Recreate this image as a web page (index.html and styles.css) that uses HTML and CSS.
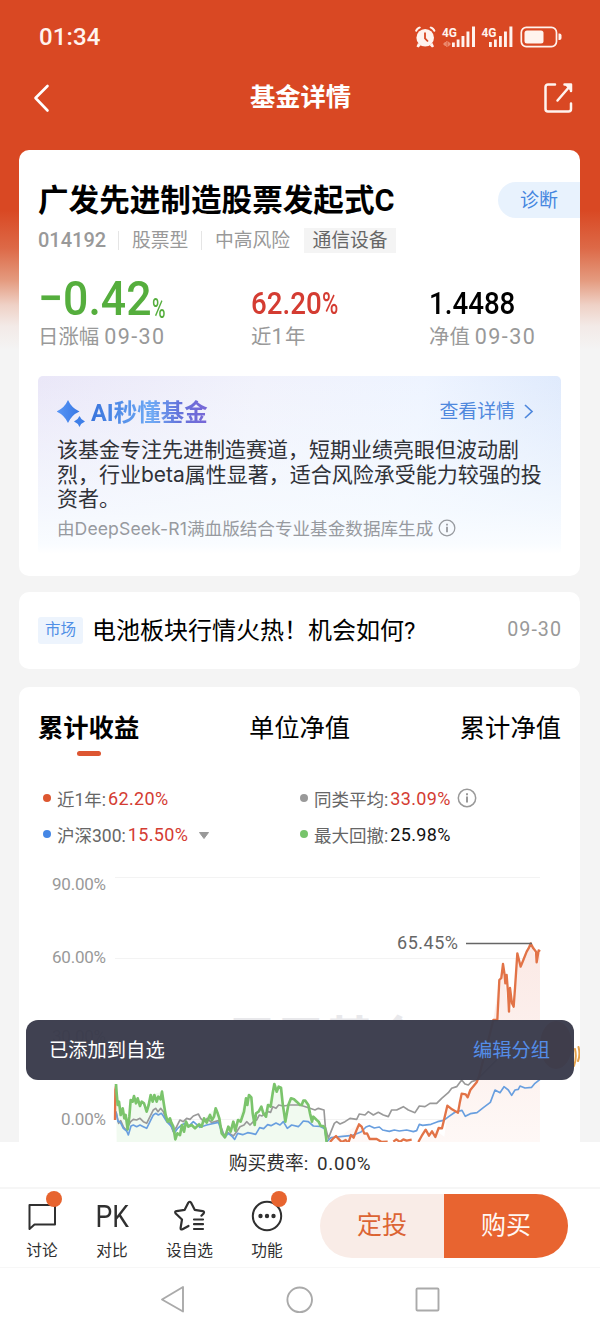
FILE: index.html
```html
<!DOCTYPE html>
<html lang="zh-CN">
<head>
<meta charset="utf-8">
<title>基金详情</title>
<link rel="stylesheet" href="styles.css">
</head>
<body>
<div class="phone">
  <main class="content">
    <div class="status">
      <span class="clock">01:34</span>
      <svg class="status-icons" width="150" height="28" viewBox="414 23 150 28">
        <g fill="#fff3ee" stroke="none">
          <circle cx="425.200" cy="37.800" r="8.800"/>
          <path d="M415 31a7 7 0 0 1 5-4.500l1 1.300a9 9 0 0 0-4.600 4.200zM435.500 31a7 7 0 0 0-5-4.500l-1 1.300a9 9 0 0 1 4.600 4.200z"/>
          <path d="M418 43l3 2-2.500 2.500-2-1zM432.500 43l-3 2 2.500 2.500 2-1z"/>
          <path d="M452 42.500h2.800v4.500H452zM456.700 39.500h2.800V47h-2.800zM461.500 36h2.900v11h-2.900zM466.500 31.500h2.900V47h-2.900zM472 26.500h3V47h-3zM489 42h2.800v5H489zM494 39.500h2.800V47H494zM499 36h2.800v11H499zM504 31.500h2.900V47H504zM509.400 26.500h3V47h-3z"/>
          <rect x="524.500" y="30.500" width="19" height="13" rx="2.500"/>
          <path d="M558.500 33.500h1a2 2 0 0 1 2 2v2.500a2 2 0 0 1-2 2h-1z"/>
        </g>
        <path d="M425 32.500v5.800l3 3.200" fill="none" stroke="#d94924" stroke-width="1.800"/>
        <path d="M443.500 44l2-2v4zM450.500 44l-2-2v4zM446.500 41v6M447.800 41v6" fill="#ee9479" stroke="#ee9479" stroke-width=".7"/>
        <rect x="521.300" y="27.400" width="35.200" height="19.200" rx="5" fill="none" stroke="#fff3ee" stroke-width="1.700"/>
        <text x="442" y="37" class="net" textLength="15" lengthAdjust="spacingAndGlyphs">4G</text>
        <text x="481.500" y="37" class="net" textLength="15" lengthAdjust="spacingAndGlyphs">4G</text>
      </svg>
    </div>
    <header class="navbar">
      <svg width="20" height="32" viewBox="0 0 20 32"><path d="M15.500 4L3.500 16l12 12.500" fill="none" stroke="#fff" stroke-width="2.600" stroke-linecap="round" stroke-linejoin="round"/></svg>
      <h1>基金详情</h1>
      <svg width="32" height="32" viewBox="0 0 32 32"><g fill="none" stroke="#fff4ef" stroke-width="2.500" stroke-linecap="round" stroke-linejoin="round"><path d="M12 2.500H5A2.500 2.500 0 0 0 2.500 5v22A2.500 2.500 0 0 0 5 29.500h20.500A2.500 2.500 0 0 0 28 27v-5.500M14.500 18.500L27 4"/><path d="M21.500 2.500H28V9"/></g><path d="M21 2h7.500v8z" fill="#fff4ef"/></svg>
    </header>

    <section class="card fund">
      <div class="fund-head"><h2>广发先进制造股票发起式C</h2><span class="diagnose">诊断</span></div>
      <div class="meta"><b>014192</b><i></i><span class="kind">股票型</span><i></i><span class="risk">中高风险</span><em>通信设备</em></div>
      <div class="stats">
        <div class="stat"><div class="value down"><span class="big">−0.42</span><span class="unit">%</span></div><p>日涨幅 <span class="date">09-30</span></p></div>
        <div class="stat"><div class="value up"><span class="year">62.20<small>%</small></span></div><p>近<span class="date">1</span>年</p></div>
        <div class="stat"><div class="value"><span class="nav">1.4488</span></div><p>净值 <span class="date">09-30</span></p></div>
      </div>
      <div class="ai">
        <div class="ai-head">
          <svg width="30" height="30" viewBox="0 0 30 30"><defs><linearGradient id="spark" x1="0" x2="1"><stop stop-color="#5a97f6"/><stop offset="1" stop-color="#3777e4"/></linearGradient></defs><path d="M11 1Q14.500 9 22.500 12.500 14.500 16 11 24 7.500 16-.5 12.500 7.500 9 11 1z" fill="url(#spark)"/><path d="M22.500 17q1.600 4 5.500 5.500-3.900 1.500-5.500 5.500-1.600-4-5.500-5.500 3.900-1.500 5.500-5.500z" fill="#3f7fe8"/></svg>
          <strong>AI秒懂基金</strong>
          <a>查看详情</a>
          <svg class="chev" width="12" height="18" viewBox="0 0 12 18"><path d="M2 2l7 6.500L2 15" fill="none" stroke="#4f88dd" stroke-width="1.700"/></svg>
        </div>
        <p class="summary">该基金专注先进制造赛道，短期业绩亮眼但波动剧<br>烈，行业beta属性显著，适合风险承受能力较强的投<br>资者。</p>
        <div class="source"><span>由<span class="lat">DeepSeek-R1</span>满血版结合专业基金数据库生成</span><svg width="18" height="18" viewBox="0 0 20 20"><circle cx="10" cy="10" r="8.700" fill="none" stroke="#979a9f" stroke-width="1.400"/><path d="M10 8.600v6M10 5.300v1.900" stroke="#979a9f" stroke-width="2"/></svg></div>
      </div>
    </section>

    <section class="card news"><span class="tag">市场</span><span class="headline">电池板块行情火热！机会如何?</span><time>09-30</time></section>

    <section class="card perf">
      <div class="tabs"><span class="on">累计收益</span><span>单位净值</span><span>累计净值</span></div>
      <div class="legend">
        <div><i class="dot orange"></i><span>近1年:</span><b class="red">62.20%</b></div>
        <div><i class="dot gray"></i><span>同类平均:</span><b class="red">33.09%</b><svg class="info" width="20" height="20" viewBox="0 0 20 20"><circle cx="10" cy="10" r="8.700" fill="none" stroke="#999" stroke-width="1.500"/><path d="M10 8.600v6M10 5.300v1.900" stroke="#999" stroke-width="2"/></svg></div>
        <div><i class="dot blue"></i><span>沪深300:</span><b class="red">15.50%</b><svg class="caret" width="10" height="7" viewBox="0 0 10 7"><path d="M.5.500h9L5 6.500z" fill="#999" stroke="#999" stroke-linejoin="round"/></svg></div>
        <div><i class="dot green"></i><span>最大回撤:</span><b>25.98%</b></div>
      </div>
      <svg class="chart" width="561" height="282" viewBox="19 860 561 282">
        <defs><linearGradient id="gain" x1="0" y1="0" x2="0" y2="1"><stop stop-color="#fbe9e5"/><stop offset="1" stop-color="#fef8f6"/></linearGradient></defs>
        <path d="M115 877.500h425M115 958.500h425M115 1038.500h425M115 1119.500h425" stroke="#f3f3f3" fill="none"/>
        <text class="mark" x="229" y="1054" textLength="192">天天基金</text>
        <g class="axis"><text x="52" y="889.500" textLength="54">90.00%</text><text x="52" y="963" textLength="54">60.00%</text><text x="52" y="1042" textLength="54">30.00%</text><text x="61" y="1125" textLength="45">0.00%</text></g>
        <g transform="translate(0 860) scale(.33333)" fill="none" stroke-linejoin="round">
          <path fill="#f1faf0" d="M348 672 357 725 383 808 392 720 402 708 440 755 452 705 486 695 497 765 514 788 526 838 546 800 585 795 612 775 647 745 675 832 714 780 742 705 764 795 804 735 823 672 843 683 856 785 873 715 900 735 916 722 936 785 956 785 975 805 980 846H350z"/>
          <path fill="url(#gain)" d="M990 846 1078 792 1110 846H1255L1305 810 1333 830 1345 735 1374 757 1385 704 1405 700 1430 660 1480 480 1498 360 1509 312 1525 458 1541 440 1552 280 1562 320 1592 250 1610 300 1620 275V846z"/>
          <path class="line gray-line" d="M348 755 356 790 362 782 370 800 380 812 386 795 392 785 400 778 410 780 420 775 430 785 440 790 450 770 460 750 467 745 474 755 482 745 490 755 497 775 510 790 520 815 530 800 540 780 550 785 560 775 570 778 580 768 595 762 602 775 612 785 622 775 635 788 655 782 663 800 672 825 685 818 700 828 710 815 720 800 732 795 740 785 750 795 760 785 770 780 778 765 786 768 795 760 805 755 812 757 818 740 828 745 836 735 850 738 870 735 900 735 930 745 945 750 955 745 972 750 976 800 985 835 993 815 1003 790 1010 785 1020 792 1035 785 1050 775 1070 778 1078 762 1095 765 1105 755 1120 765 1135 757 1150 765 1165 770 1175 750 1190 750 1210 740 1225 750 1245 758 1258 738 1275 740 1290 730 1310 730 1325 715 1345 698 1355 685 1370 680 1385 660 1395 672 1405 675 1415 665 1430 660 1490 600"/>
          <path class="line blue-line" d="M348 755 354 785 360 785 370 805 380 813 385 825 393 798 400 795 410 800 420 795 430 800 440 805 450 785 460 765 467 760 475 765 484 760 490 768 500 785 515 800 523 820 533 805 545 795 555 790 565 800 580 785 600 802 620 795 655 787 664 812 674 832 685 820 695 828 704 838 713 820 728 824 743 818 755 820 767 823 779 803 791 806 803 794 813 797 828 789 840 795 850 785 862 805 875 795 895 800 900 795 910 783 925 785 940 798 960 799 974 806 980 846 993 833 1028 829 1058 826 1083 816 1098 801 1108 797 1123 804 1138 801 1148 810 1168 814 1183 810 1198 813 1220 810 1240 815 1250 812 1258 793 1268 796 1293 793 1313 785 1331 781 1346 770 1366 756 1386 751 1396 769 1411 761 1431 758 1451 742 1471 727 1485 690 1500 698 1512 680 1525 690 1535 706 1545 690 1555 688 1560 678 1575 684 1595 682 1605 670 1620 658"/>
          <path class="line orange-line" d="M345 780 346 690 348 677M990 846 998 837 1008 828 1015 836 1025 846 1037 840 1045 849 1053 825 1061 833 1069 812 1077 793 1085 800 1093 821 1101 820 1109 837 1130 837 1145 846 1163 845M1180 845 1189 838 1200 846 1210 838 1220 842 1235 839M1255 846 1265 828 1277 809 1287 827 1296 814 1306 831 1316 804 1326 805 1332 780 1342 737 1356 748 1374 758 1379 730 1385 701 1397 703 1403 712 1411 690 1430 667 1437 650 1480 480 1492 480 1498 360 1504 354 1509 312 1514 345 1516 370 1520 345 1524 398 1527 455 1530 384 1536 430 1541 440 1545 385 1552 280 1557 300 1562 320 1570 300 1580 275 1587 263 1592 250 1600 265 1608 275 1610 307 1616 271 1620 275"/>
          <path class="line green-line" d="M348 672 350 700 353 735 357 725 362 765 368 745 373 775 377 765 383 808 388 770 392 720 398 725 402 708 408 730 413 715 420 738 425 725 432 730 440 755 446 735 452 705 458 725 463 705 470 725 475 710 482 718 486 695 492 735 497 765 503 785 510 775 514 788 520 800 526 838 532 820 540 825 546 795 552 815 558 785 565 800 575 795 585 805 597 793 605 800 612 775 620 788 630 765 636 780 642 770 647 745 653 760 658 775 665 820 675 832 685 800 692 815 700 785 706 812 714 780 722 785 732 755 738 715 742 735 747 705 754 712 758 760 764 795 768 760 776 755 784 740 790 760 798 770 804 735 812 740 818 700 823 672 830 695 836 680 843 683 848 730 856 785 865 735 873 715 882 718 890 725 900 735 905 735 910 722 916 722 925 735 930 760 936 785 940 770 950 780 956 785 962 798 970 798 975 805 980 846"/>
        </g>
        <path d="M466 943.500h66" stroke="#666" stroke-width="1.300"/><text class="peak" x="397" y="949" textLength="61">65.45%</text>
        <g><ellipse cx="556" cy="1045" rx="16" ry="24" fill="#d67950"/><path d="M575 1049q2 9-1 17M578.500 1047q2 8-.5 14" stroke="#e5a34d" stroke-width="2" fill="none" stroke-linecap="round"/></g>
      </svg>
    </section>
    <div class="toast"><span>已添加到自选</span><a>编辑分组</a></div>
  </main>

  <div class="fee">购买费率: <span>0.00%</span></div>
  <nav class="actions">
    <div class="action a1"><svg width="36" height="36" viewBox="24 1196 36 36"><path d="M29.500 1203h25.500v19.500H34.500l-5 4.500z" fill="none" stroke="#303030" stroke-width="2" stroke-linejoin="round"/></svg><span>讨论</span><i class="badge"></i></div>
    <div class="action a2"><b>PK</b><span>对比</span></div>
    <div class="action a3"><svg width="36" height="36" viewBox="172 1198 36 36"><g fill="none" stroke="#303030" stroke-width="2.200" stroke-linecap="round" stroke-linejoin="round"><path d="M188.500 1226l-6 3.300q-2 .700-1.900-1.300l1.400-8.500-6.300-6q-1.400-1.900.8-2.400l8.200-1.300 3.700-7.200q1.400-1.700 2.600 0l3.700 7.200 7.900 1.300q2.200.5 1 2.400l-2.200 2.200M194 1219.500h9M194 1224.200h9M194 1229h9"/></g></svg><span>设自选</span></div>
    <div class="action a4"><svg width="36" height="36" viewBox="249 1198 36 36"><circle cx="267" cy="1216" r="14.200" fill="none" stroke="#303030" stroke-width="2"/><g fill="#303030"><circle cx="260.500" cy="1216" r="2.200"/><circle cx="267" cy="1216" r="2.200"/><circle cx="273.500" cy="1216" r="2.200"/></g></svg><span>功能</span><i class="badge"></i></div>
    <div class="pill"><span class="plan">定投</span><span class="buy">购买</span></div>
  </nav>
  <div class="system">
    <svg width="600" height="65" viewBox="0 1268 600 65"><g fill="none" stroke="#aaa" stroke-width="1.900" stroke-linejoin="round"><path d="M162 1299.500l21-12.500v24.500z"/><circle cx="299.700" cy="1299.800" r="12.300"/><rect x="416.500" y="1288.500" width="22" height="22" rx="1"/></g></svg>
  </div>
</div>
</body>
</html>
```
FILE: styles.css
```css
* { box-sizing: border-box; }
body, h1, h2, p { margin: 0; }
body { width: 600px; background: #fff; font-family: Roboto, "Noto Sans CJK SC", sans-serif; color: #000; }
i, em { font-style: normal; }
svg { display: block; flex: none; }
.phone { width: 600px; height: 1332px; overflow: hidden; display: flex; flex-direction: column; white-space: nowrap; }
.content { position: relative; height: 1142px; flex: none; overflow: hidden; background: linear-gradient(#d94823 0, #d94823 210px, #dd6947 248px, #e49a7e 280px, #efd1c6 305px, #f3eae7 326px, #f4f4f4 350px); }

.status { height: 66px; padding: 8px 36px 0 39px; display: flex; align-items: center; justify-content: space-between; }
.clock { font-size: 24px; line-height: 30px; font-weight: 500; color: #fff3ee; letter-spacing: .1px; }
.net { font: 700 13px Roboto, sans-serif; fill: #fff3ee; }
.navbar { height: 84px; padding: 1px 25px 22px 32px; display: flex; align-items: center; justify-content: space-between; color: #fff; }
.navbar h1 { font-size: 25.300px; line-height: 36px; font-weight: 700; padding: 1px 0 0 6px; }

.card { width: 561px; margin-left: 19px; background: #fff; border-radius: 10px; overflow: hidden; }
.fund { height: 426px; padding: 28px 19px 0 19px; }
.fund-head { height: 42px; display: flex; align-items: center; justify-content: space-between; margin-right: -19px; }
.fund-head h2 { padding-top: 3px; font-size: 30.600px; line-height: 42px; font-weight: 700; }
.diagnose { width: 82px; height: 36px; margin-top: 1px; border-radius: 18px 0 0 18px; background: #e8f2fd; color: #4586df; font-size: 19px; line-height: 37px; text-align: center; }
.meta { height: 40px; display: flex; align-items: center; color: #999; font-size: 18.800px; line-height: 24px; }
.meta b { width: 80px; font-size: 20px; font-weight: 500; }
.meta i { width: 1px; height: 19px; background: #e5e5e5; }
.meta .kind { width: 82px; padding-left: 13px; margin-top: 1px; }
.risk { width: 102px; padding-left: 13px; margin-top: 1px; }
.meta em { width: 92px; height: 25px; line-height: 26px; background: #f4f4f4; color: #666; text-align: center; }
.stats { height: 115px; display: grid; grid-template-columns: 213px 178px 1fr; }
.value { height: 64px; display: flex; align-items: flex-end; font-weight: 500; }
.value > span { transform-origin: 0 100%; }
.down { color: #55ae3d; }
.up { color: #d43c32; }
.big { width: 114px; font-size: 49px; line-height: 50px; font-weight: 500; transform: scaleX(.91); }
.unit { font-size: 27px; line-height: 30px; transform: scaleX(.68); }
.year, .nav { font-size: 32px; line-height: 36px; transform: scaleX(.865); margin-bottom: 3px; }
.year small { font-size: 32px; display: inline-block; transform: scaleX(.8); transform-origin: 0 0; }
.stat p { font-size: 20.400px; line-height: 26px; color: #999; }
.date { font-size: 21.500px; letter-spacing: 1.400px; }

.ai { height: 178px; margin-top: 1px; padding: 18px 0 0 19px; border-radius: 5px; background: linear-gradient(rgba(255,255,255,0) 0, rgba(247,251,255,.8) 75%, #f9fcff 94%, #fff 100%), linear-gradient(100deg, #eae7f8 0, #f1f2fc 40%, #eef4ff 70%, #dce8fc 100%); }
.ai-head { height: 36px; padding-right: 26px; display: flex; align-items: center; }
.ai-head > svg:first-child { margin-top: 4px; }
.ai-head strong { margin: 1px auto 0 4px; font-size: 23.500px; line-height: 34px; background: linear-gradient(90deg, #3974dc, #6faaf5 52%, #6474db 75%, #7966d6); -webkit-background-clip: text; background-clip: text; color: transparent; }
.ai-head a { margin-top: -1px; color: #4f88dd; font-size: 18.900px; line-height: 28px; }
.chev { margin-left: 8px; }
.summary { padding-top: 8px; font: 21px/24.700px Inter, "Noto Sans CJK SC", sans-serif; color: #303238; }
.source { height: 31px; display: flex; align-items: center; gap: 5px; color: #979a9f; font-size: 17.600px; }
.lat { font-family: Inter, sans-serif; font-weight: 400; letter-spacing: .1px; }

.news { height: 77px; margin-top: 16px; padding: 0 19px; display: flex; align-items: center; }
.tag { width: 45px; height: 27px; border-radius: 3px; background: #edf4fd; color: #4f8fe6; font-size: 15.500px; line-height: 27px; text-align: center; }
.headline { margin: 0 auto 0 9px; font-size: 24px; line-height: 34px; }
.news time { color: #999; font-size: 19.700px; letter-spacing: 1px; margin: -3px -1px 0 0; }

.perf { height: 500px; margin-top: 18px; border-radius: 10px 10px 0 0; }
.tabs { height: 92px; padding: 22px 19px 0; display: flex; justify-content: space-between; font-size: 25.300px; line-height: 40px; }
.tabs .on { font-weight: 700; }
.on::after { content: ""; display: block; width: 24px; height: 5px; margin: 2px auto 0; border-radius: 3px; background: #dd5632; }
.legend { height: 81px; padding: 1px 0 0 24px; display: grid; grid-template: 36px 36px / 257px 1fr; font-size: 17.500px; }
.legend div { display: flex; align-items: center; color: #666; }
.dot { width: 8px; height: 8px; border-radius: 50%; margin-right: 6px; }
.orange { background: #dd5730; } .gray { background: #999; } .blue { background: #4587e5; } .green { background: #77c46b; }
.legend b { margin-left: 2px; font-weight: 400; font-size: 18px; letter-spacing: .35px; color: #111; }
.legend .red { color: #d43c32; }
.info { margin-left: 6px; } .caret { margin: 2px 0 0 11px; }
.mark { font: 700 46px "Noto Sans CJK SC", sans-serif; fill: #e8e8eb; }
.axis { font: 17px Roboto, sans-serif; fill: #999; }
.peak { font: 18px Roboto, sans-serif; fill: #666; }
.line { stroke-width: 5; }
.gray-line { stroke: #999; } .blue-line { stroke: #699fdf; } .orange-line { stroke: #e27347; stroke-width: 7; } .green-line { stroke: #7bc46c; stroke-width: 8; }

.toast { position: absolute; left: 26px; top: 1020px; width: 548px; height: 60px; padding: 0 24px 2px 23px; border-radius: 12px; background: rgba(58,59,75,.97); display: flex; align-items: center; justify-content: space-between; color: #fff; font-size: 19.300px; }
.toast a { color: #548de8; }

.fee { height: 45px; flex: none; text-align: center; font-size: 18.800px; line-height: 45px; color: #303030; }
.fee span { margin-left: 4px; letter-spacing: .8px; }
.actions { height: 81px; flex: none; border-top: 2px solid #f6f6f6; border-bottom: 1px solid #f7f7f7; display: flex; padding-left: 7px; color: #303030; }
.action { position: relative; width: 70px; padding-top: 9px; display: flex; flex-direction: column; align-items: center; font-size: 15.700px; line-height: 24px; }
.action > svg, .action b { height: 36px; margin-bottom: 5px; }
.action b { font-weight: 400; font-size: 32px; line-height: 37px; transform: scaleX(.83); }
.a3 { width: 85px; } .a4 { width: 70px; }
.badge { position: absolute; top: 2px; right: 15px; width: 16px; height: 16px; border-radius: 50%; background: #e7642f; }
.pill { margin: 5px 0 0 18px; width: 248px; height: 64px; border-radius: 32px; overflow: hidden; display: flex; font-size: 25px; line-height: 64px; text-align: center; }
.pill span { flex: 1; }
.plan { background: #f9ece7; color: #dc6434; }
.buy { background: #e86430; color: #fff7f2; }
.system { height: 65px; flex: none; }
```
